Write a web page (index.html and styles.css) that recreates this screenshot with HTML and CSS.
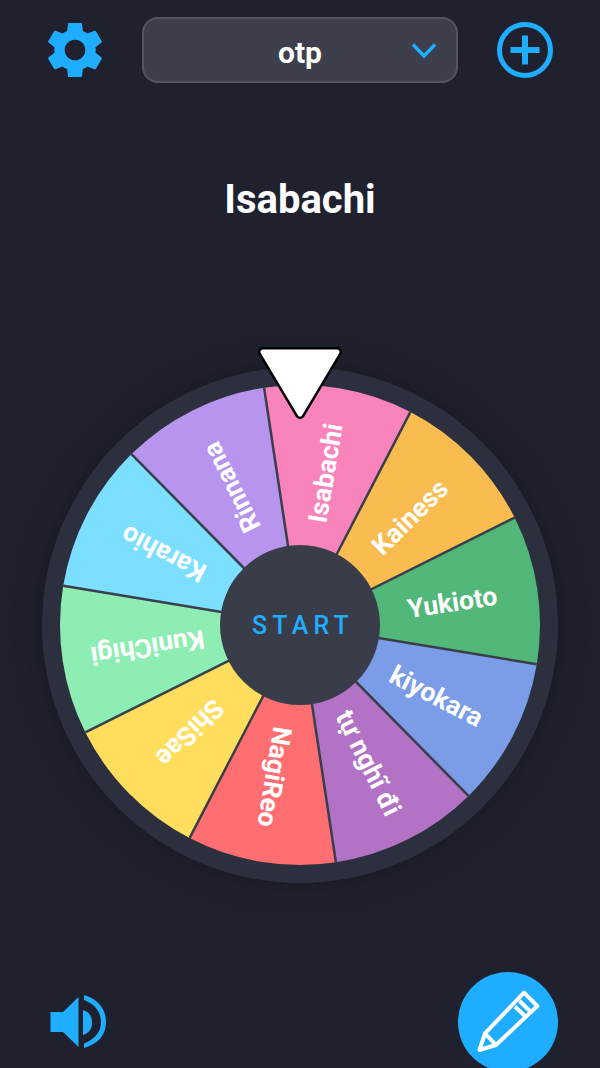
FILE: index.html

```html
<!DOCTYPE html>
<html lang="en">
<head>
    <meta charset="UTF-8">
    <title>Spin the wheel</title>
    <link rel="stylesheet" href="styles.css">
</head>
<body>

<header class="top-bar">
    <svg class="gear-icon" viewBox="2.6 2.6 18.8 18.8">
        <path fill="#1eadff" d="M19.14 12.94c.04-.3.06-.61.06-.94 0-.32-.02-.64-.07-.94l2.03-1.58c.18-.14.23-.41.12-.61l-1.92-3.32c-.12-.22-.37-.29-.59-.22l-2.39.96c-.5-.38-1.03-.7-1.62-.94l-.36-2.54c-.04-.24-.24-.41-.48-.41h-3.84c-.24 0-.43.17-.47.41l-.36 2.54c-.59.24-1.13.57-1.62.94l-2.39-.96c-.22-.08-.47 0-.59.22L2.74 8.87c-.12.21-.08.47.12.61l2.03 1.58c-.05.3-.09.63-.09.94s.02.64.07.94l-2.03 1.58c-.18.14-.23.41-.12.61l1.92 3.32c.12.22.37.29.59.22l2.39-.96c.5.38 1.03.7 1.62.94l.36 2.54c.05.24.24.41.48.41h3.84c.24 0 .44-.17.47-.41l.36-2.54c.59-.24 1.13-.56 1.62-.94l2.39.96c.22.08.47 0 .59-.22l1.92-3.32c.12-.22.07-.47-.12-.61l-2.01-1.58zM12 15.6c-1.98 0-3.6-1.62-3.6-3.6s1.62-3.6 3.6-3.6 3.6 1.62 3.6 3.6-1.62 3.6-3.6 3.6z"/>
    </svg>

    <div class="wheel-select">
        <span class="wheel-name">otp</span>
        <svg class="chevron" viewBox="0 0 26 17">
            <path d="M2 2.5 L13 14 L24 2.5"/>
        </svg>
    </div>

    <svg class="plus-icon" viewBox="0 0 56 56">
        <circle cx="28" cy="28" r="25.5"/>
        <path d="M28 13.5 V42.5 M13.5 28 H42.5"/>
    </svg>
</header>

<h1 class="result">Isabachi</h1>

<div class="wheel">
    <svg class="wheel-svg" viewBox="-258 -258 516 516">
        <circle class="wheel-rim" r="258"/>

        <g transform="rotate(-80.6)">
            <path fill="#f984bc" d="M0 0 L228.25 -74.16 A240 240 0 0 1 228.25 74.16 Z"/>
            <text x="154">Isabachi</text>
        </g>
        <g transform="rotate(-44.6)">
            <path fill="#f9bc50" d="M0 0 L228.25 -74.16 A240 240 0 0 1 228.25 74.16 Z"/>
            <text x="154">Kainess</text>
        </g>
        <g transform="rotate(-8.6)">
            <path fill="#52b87a" d="M0 0 L228.25 -74.16 A240 240 0 0 1 228.25 74.16 Z"/>
            <text x="154">Yukioto</text>
        </g>
        <g transform="rotate(27.4)">
            <path fill="#7b9ce6" d="M0 0 L228.25 -74.16 A240 240 0 0 1 228.25 74.16 Z"/>
            <text x="154">kiyokara</text>
        </g>
        <g transform="rotate(63.4)">
            <path fill="#b273c6" d="M0 0 L228.25 -74.16 A240 240 0 0 1 228.25 74.16 Z"/>
            <text x="154">tự nghĩ đi</text>
        </g>
        <g transform="rotate(99.4)">
            <path fill="#ff6f72" d="M0 0 L228.25 -74.16 A240 240 0 0 1 228.25 74.16 Z"/>
            <text x="154">NagiReo</text>
        </g>
        <g transform="rotate(135.4)">
            <path fill="#ffde5e" d="M0 0 L228.25 -74.16 A240 240 0 0 1 228.25 74.16 Z"/>
            <text x="154">ShiSae</text>
        </g>
        <g transform="rotate(171.4)">
            <path fill="#8eedb2" d="M0 0 L228.25 -74.16 A240 240 0 0 1 228.25 74.16 Z"/>
            <text x="154">KuniChigi</text>
        </g>
        <g transform="rotate(207.4)">
            <path fill="#7cdfff" d="M0 0 L228.25 -74.16 A240 240 0 0 1 228.25 74.16 Z"/>
            <text x="154">Karahio</text>
        </g>
        <g transform="rotate(243.4)">
            <path fill="#b794ee" d="M0 0 L228.25 -74.16 A240 240 0 0 1 228.25 74.16 Z"/>
            <text x="154">Rinnana</text>
        </g>

        <!-- separators -->
        <g class="dividers">
            <line x2="240" transform="rotate(-98.6)"/>
            <line x2="240" transform="rotate(-62.6)"/>
            <line x2="240" transform="rotate(-26.6)"/>
            <line x2="240" transform="rotate(9.4)"/>
            <line x2="240" transform="rotate(45.4)"/>
            <line x2="240" transform="rotate(81.4)"/>
            <line x2="240" transform="rotate(117.4)"/>
            <line x2="240" transform="rotate(153.4)"/>
            <line x2="240" transform="rotate(189.4)"/>
            <line x2="240" transform="rotate(225.4)"/>
        </g>

        <circle class="wheel-hub" r="80"/>
        <text class="start-label" x="3">START</text>
    </svg>

    <svg class="pointer" viewBox="0 0 84 72">
        <polygon class="pointer-edge" points="5,5 79,5 42,67"/>
        <polygon class="pointer-fill" points="5,5 79,5 42,67"/>
    </svg>
</div>

<footer class="bottom-bar">
    <svg class="sound-icon" viewBox="0 0 57 54">
        <path d="M0.5 17 H13 L28.5 2 V52 L13 37 H0.5 Z"/>
        <path d="M33 15 C39 17 42 21 42 27.5 C42 34 39 38 33 40 Z"/>
        <path d="M34 0 C48 4 56 14 56 27 C56 40 48 49 34 53 V48.5 C45 44 51 37 51 27 C51 17 45 9 34 5 Z"/>
    </svg>

    <div class="edit-button">
        <svg class="pencil-icon" viewBox="0 0 70 70">
            <path d="M6.5 63 L12 46.3 L51 5.7 L64.3 19 L23 58 Z"/>
            <path d="M12 46.3 L23 58 M42 19.7 L52 29 M46.3 13.7 L57.7 24.7"/>
        </svg>
    </div>
</footer>

</body>
</html>
```

FILE: styles.css

```css
body {
    font-family: Roboto, Arial, sans-serif;
    background-color: #1f212e;
    color: #fff;
    margin: 0;
    height: 1068px;
    overflow: hidden;
}

.top-bar {
    display: flex;
    align-items: center;
    padding: 17px 47px 0 48px;
    justify-content: space-between;
}

.gear-icon {
    width: 54px;
    height: 54px;
}

.wheel-select {
    position: relative;
    box-sizing: border-box;
    width: 316px;
    height: 66px;
    background-color: #3d3f4c;
    border: 2px solid #54565f;
    border-radius: 16px;
    display: flex;
    align-items: center;
    justify-content: center;
}

.wheel-name {
    font-size: 30px;
    font-weight: 700;
    padding: 4px 0 0 1px;
}

.chevron {
    position: absolute;
    right: 19px;
    top: 23px;
    width: 26px;
    height: 17px;
}

.chevron path {
    fill: none;
    stroke: #1eadff;
    stroke-width: 3.6;
}

.plus-icon {
    width: 56px;
    height: 56px;
    fill: none;
    stroke: #1eadff;
}

.plus-icon circle {
    stroke-width: 5;
}

.plus-icon path {
    stroke-width: 6;
}

.result {
    font-size: 40px;
    font-weight: 700;
    line-height: 46px;
    text-align: center;
    margin: 94px 0 144px;
}

.wheel {
    position: relative;
    width: 516px;
    height: 516px;
    margin: 0 auto;
}

.wheel-svg {
    display: block;
    width: 516px;
    height: 516px;
    overflow: visible;
}

.wheel-rim {
    fill: #2c2f3d;
    filter: drop-shadow(0 0 14px rgba(0, 0, 0, 0.3));
}

.wheel-svg text {
    fill: #fff;
    font-size: 26.5px;
    font-weight: 700;
    text-anchor: middle;
    dominant-baseline: central;
}

.dividers line {
    stroke: #3a3d4a;
    stroke-width: 2.5;
}

.wheel-hub {
    fill: #393c49;
}

.wheel-svg .start-label {
    fill: #1eadff;
    font-size: 25px;
    font-weight: 500;
    letter-spacing: 5.2px;
}

.pointer {
    position: absolute;
    left: 216px;
    top: -20px;
    width: 84px;
    height: 72px;
}

.pointer-edge {
    fill: #000;
    stroke: #000;
    stroke-width: 10;
    stroke-linejoin: round;
}

.pointer-fill {
    fill: #fff;
    stroke: #fff;
    stroke-width: 5;
    stroke-linejoin: round;
}

.bottom-bar {
    display: flex;
    align-items: center;
    justify-content: space-between;
    padding: 0 42px 0 50px;
    margin-top: 89px;
}

.sound-icon {
    width: 57px;
    height: 54px;
    fill: #1eadff;
}

.edit-button {
    width: 100px;
    height: 100px;
    border-radius: 50%;
    background-color: #1eadff;
    display: flex;
    align-items: center;
    justify-content: center;
}

.pencil-icon {
    width: 70px;
    height: 70px;
    fill: none;
    stroke: #fff;
    stroke-width: 4;
    stroke-linejoin: round;
}
```
